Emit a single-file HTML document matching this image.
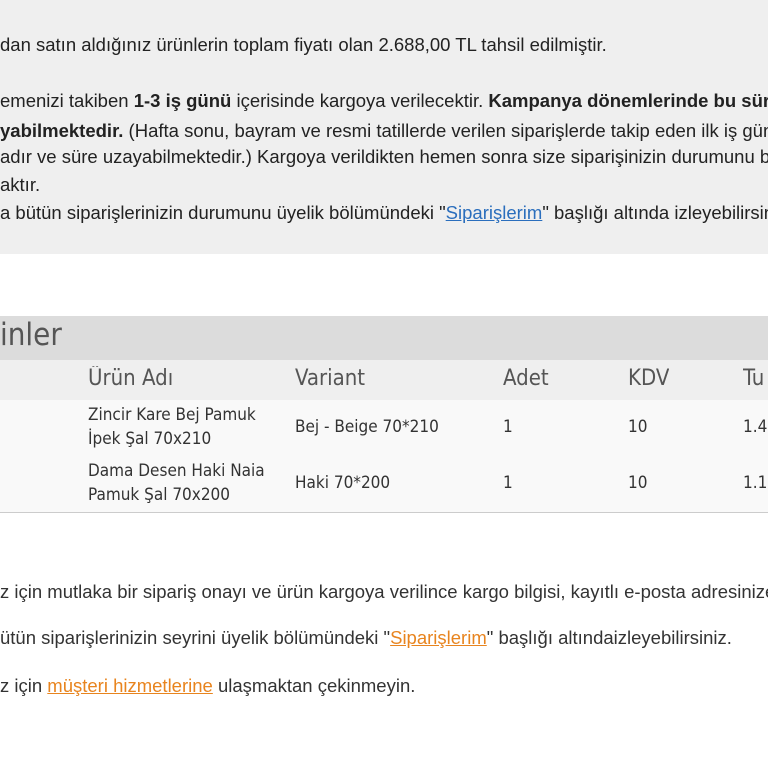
<!DOCTYPE html>
<html><head><meta charset="utf-8"><style>
html,body{margin:0;width:768px;height:768px;overflow:hidden;background:#fff}
#w{position:relative;width:768px;height:768px;overflow:hidden;font-family:"Liberation Sans",Arial,sans-serif;color:#222}
.l{position:absolute;left:0;width:768px;overflow:hidden;white-space:nowrap;font-size:18.5px;line-height:20px}
.t{position:absolute;white-space:nowrap;overflow:hidden;font-family:"DejaVu Sans Condensed","DejaVu Sans",sans-serif;font-stretch:condensed;color:#333}
a.b{color:#2a6ebd;text-decoration:underline}
a.o{color:#e8841e;text-decoration:underline}
</style></head><body><div id="w">
<div style="position:absolute;left:0;top:0;width:768px;height:254px;background:#efefef"></div>
<div class="l" style="top:35px">dan satın aldığınız ürünlerin toplam fiyatı olan 2.688,00 TL tahsil edilmiştir.</div>
<div class="l" style="top:91px">emenizi takiben <b>1-3 iş günü</b> içerisinde kargoya verilecektir. <b>Kampanya dönemlerinde bu süre</b></div>
<div class="l" style="top:121px"><b>yabilmektedir.</b> (Hafta sonu, bayram ve resmi tatillerde verilen siparişlerde takip eden ilk iş günü</div>
<div class="l" style="top:147px">adır ve süre uzayabilmektedir.) Kargoya verildikten hemen sonra size siparişinizin durumunu bildiren</div>
<div class="l" style="top:175px">aktır.</div>
<div class="l" style="top:203px">a bütün siparişlerinizin durumunu üyelik bölümündeki "<a class="b">Siparişlerim</a>" başlığı altında izleyebilirsiniz.</div>

<div style="position:absolute;left:0;top:316px;width:768px;height:44px;background:#dcdcdc"></div>
<div class="t" style="left:0;top:317px;font-size:31px;color:#555">inler</div>
<div style="position:absolute;left:0;top:360px;width:768px;height:40px;background:#efefef"></div>
<div style="position:absolute;left:0;top:400px;width:768px;height:112px;background:#f9f9f9;border-bottom:1px solid #ccc"></div>
<div class="t" style="left:88px;top:366px;font-size:22px;color:#555">Ürün Adı</div>
<div class="t" style="left:295px;top:366px;font-size:22px;color:#555">Variant</div>
<div class="t" style="left:503px;top:366px;font-size:22px;color:#555">Adet</div>
<div class="t" style="left:628px;top:366px;font-size:22px;color:#555">KDV</div>
<div class="t" style="left:743px;top:366px;width:25px;font-size:22px;color:#555">Tu</div>
<div class="t" style="left:88px;top:403px;font-size:17px;line-height:24px">Zincir Kare Bej Pamuk<br>İpek Şal 70x210</div>
<div class="t" style="left:295px;top:415px;font-size:17px;line-height:24px">Bej - Beige 70*210</div>
<div class="t" style="left:503px;top:415px;font-size:17px;line-height:24px">1</div>
<div class="t" style="left:628px;top:415px;font-size:17px;line-height:24px">10</div>
<div class="t" style="left:743px;top:415px;width:25px;font-size:17px;line-height:24px">1.4</div>
<div class="t" style="left:88px;top:459px;font-size:17px;line-height:24px">Dama Desen Haki Naia<br>Pamuk Şal 70x200</div>
<div class="t" style="left:295px;top:471px;font-size:17px;line-height:24px">Haki 70*200</div>
<div class="t" style="left:503px;top:471px;font-size:17px;line-height:24px">1</div>
<div class="t" style="left:628px;top:471px;font-size:17px;line-height:24px">10</div>
<div class="t" style="left:743px;top:471px;width:25px;font-size:17px;line-height:24px">1.1</div>

<div class="l" style="top:582px;color:#333">z için mutlaka bir sipariş onayı ve ürün kargoya verilince kargo bilgisi, kayıtlı e-posta adresinize</div>
<div class="l" style="top:628px;color:#333">ütün siparişlerinizin seyrini üyelik bölümündeki "<a class="o">Siparişlerim</a>" başlığı altındaizleyebilirsiniz.</div>
<div class="l" style="top:676px;color:#333">z için <a class="o">müşteri hizmetlerine</a> ulaşmaktan çekinmeyin.</div>
</div></body></html>
